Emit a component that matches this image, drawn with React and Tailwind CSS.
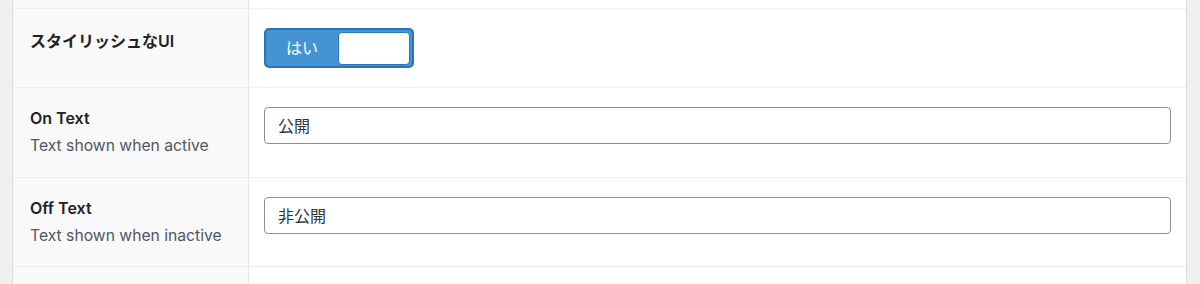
export default function App() {
  const font = { fontFamily: 'Inter, "Noto Sans CJK JP", sans-serif' };
  return (
    <div className="w-[1200px] h-[284px] bg-[#f0f0f1] flex overflow-hidden" style={font}>
      <div className="w-[12px] shrink-0" />
      <div className="flex-1 flex flex-col border-l border-r border-[#dcdcde] bg-white">
        {/* top partial row */}
        <div className="flex h-[9px] shrink-0 border-b border-[#eeeeee]">
          <div className="w-[236px] shrink-0 bg-[#f9f9f9] border-r border-[#e5e5e5]" />
          <div className="flex-1" />
        </div>
        {/* row 1 */}
        <div className="flex h-[79px] shrink-0 border-b border-[#eeeeee]">
          <div className="w-[236px] shrink-0 bg-[#f9f9f9] border-r border-[#e5e5e5] pl-[17px] pt-[22px]">
            <div className="text-[16px] leading-[20px] font-semibold text-[#1d2327]">スタイリッシュなUI</div>
          </div>
          <div className="flex-1 pl-[15px] pt-[19px]">
            <div className="w-[150px] h-[40px] rounded-[5px] border-2 border-[#2a74b8] bg-[#4494d4] flex items-center p-[2px]">
              <div className="flex-1 text-center text-white text-[16px] pr-[2px]">はい</div>
              <div className="w-[72px] h-[33px] bg-white rounded-[4px] border border-[#2a74b8]" />
            </div>
          </div>
        </div>
        {/* row 2 */}
        <div className="flex h-[90px] shrink-0 border-b border-[#eeeeee]">
          <div className="w-[236px] shrink-0 bg-[#f9f9f9] border-r border-[#e5e5e5] pl-[17px] pt-[20px]">
            <div className="text-[16px] leading-[20px] font-semibold text-[#1d2327]">On Text</div>
            <div className="text-[15.7px] leading-[20px] text-[#50575e] mt-[8px]">Text shown when active</div>
          </div>
          <div className="flex-1 pl-[15px] pr-[15px] pt-[19px]">
            <div className="h-[37px] border border-[#8c8f94] rounded-[4px] flex items-center px-[13px] text-[16px] text-[#2c3338]">公開</div>
          </div>
        </div>
        {/* row 3 */}
        <div className="flex h-[89px] shrink-0 border-b border-[#eeeeee]">
          <div className="w-[236px] shrink-0 bg-[#f9f9f9] border-r border-[#e5e5e5] pl-[17px] pt-[20px]">
            <div className="text-[16px] leading-[20px] font-semibold text-[#1d2327]">Off Text</div>
            <div className="text-[15.7px] leading-[20px] text-[#50575e] mt-[8px]">Text shown when inactive</div>
          </div>
          <div className="flex-1 pl-[15px] pr-[15px] pt-[19px]">
            <div className="h-[37px] border border-[#8c8f94] rounded-[4px] flex items-center px-[13px] text-[16px] text-[#2c3338]">非公開</div>
          </div>
        </div>
        {/* bottom partial row */}
        <div className="flex flex-1">
          <div className="w-[236px] shrink-0 bg-[#f9f9f9] border-r border-[#e5e5e5]" />
          <div className="flex-1" />
        </div>
      </div>
      <div className="w-[13px] shrink-0" />
    </div>
  );
}
